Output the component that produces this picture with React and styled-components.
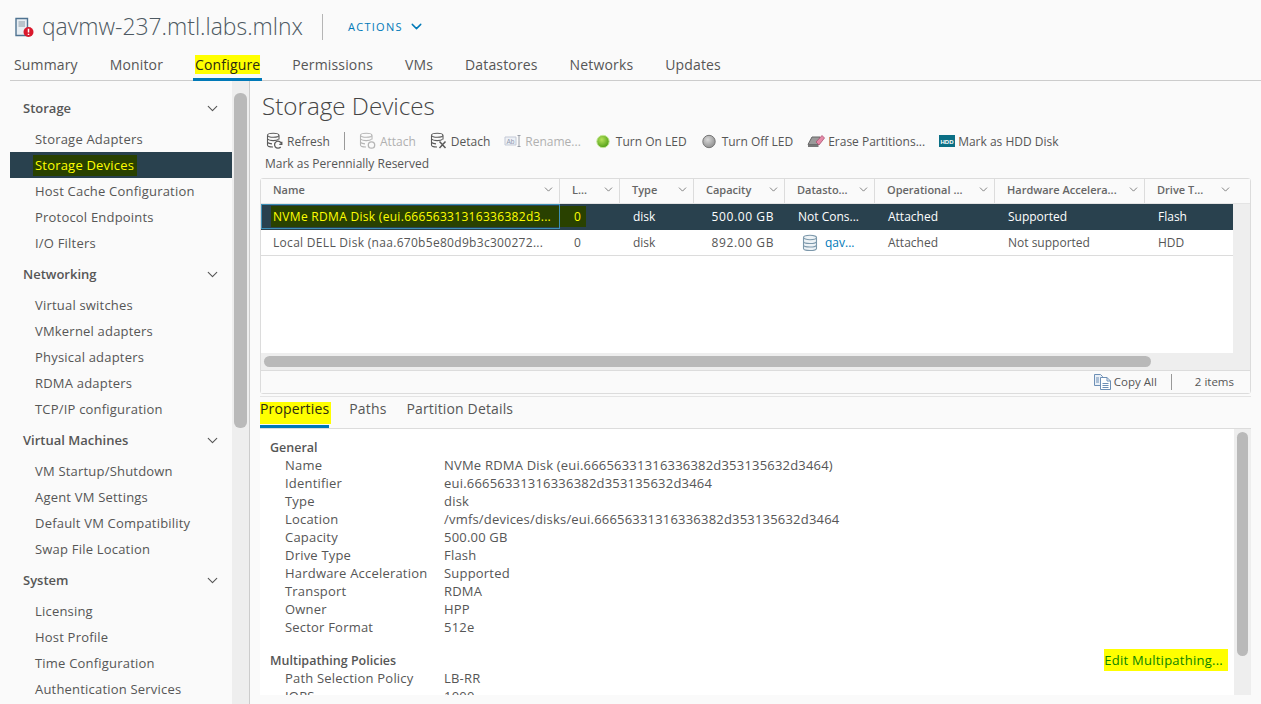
import React from "react";
import styled, { createGlobalStyle } from "styled-components";
import { ChevronDown } from "lucide-react";

const GlobalStyle = createGlobalStyle`
  html, body {
    margin: 0;
    padding: 0;
    background: #fafafa;
    overflow: hidden;
  }
  * {
    box-sizing: border-box;
  }
  body {
    font-family: "Open Sans", "Noto Sans", sans-serif;
    color: #565656;
  }
`;

const tabs = ["Summary", "Monitor", "Configure", "Permissions", "VMs", "Datastores", "Networks", "Updates"];

const sideGroups = [
  { title: "Storage", items: ["Storage Adapters", "Storage Devices", "Host Cache Configuration", "Protocol Endpoints", "I/O Filters"] },
  { title: "Networking", items: ["Virtual switches", "VMkernel adapters", "Physical adapters", "RDMA adapters", "TCP/IP configuration"] },
  { title: "Virtual Machines", items: ["VM Startup/Shutdown", "Agent VM Settings", "Default VM Compatibility", "Swap File Location"] },
  { title: "System", items: ["Licensing", "Host Profile", "Time Configuration", "Authentication Services"] },
];

const columns = ["Name", "L...", "Type", "Capacity", "Datasto...", "Operational ...", "Hardware Accelera...", "Drive T..."];

const general = [
  ["Name", "NVMe RDMA Disk (eui.66656331316336382d353135632d3464)"],
  ["Identifier", "eui.66656331316336382d353135632d3464"],
  ["Type", "disk"],
  ["Location", "/vmfs/devices/disks/eui.66656331316336382d353135632d3464"],
  ["Capacity", "500.00 GB"],
  ["Drive Type", "Flash"],
  ["Hardware Acceleration", "Supported"],
  ["Transport", "RDMA"],
  ["Owner", "HPP"],
  ["Sector Format", "512e"],
];

const HostIcon = () => (
  <svg width="20" height="22" viewBox="0 0 20 22">
    <path d="M1 2.500h11.500v17H1z" fill="#e8eef3" stroke="#4f7391" strokeWidth="1.400" />
    <path d="M3.500 5h6.500v6H3.500z" fill="#b9c3cb" />
    <circle cx="13.500" cy="16" r="5" fill="#d9182c" />
    <path d="M13.500 12.800v3.800M13.500 17.800v1.200" stroke="#fff" strokeWidth="1.500" />
  </svg>
);

const DbIcon = ({ color = "#5a5a5a", badge }) => (
  <svg width="18" height="18" viewBox="0 0 18 18" fill="none" stroke={color} strokeWidth="1.100">
    <path d="M1.500 3.500v9.500c0 1.200 2.400 2 5.500 2M13 3.500v4" />
    <ellipse cx="7.200" cy="3.300" rx="5.700" ry="2" />
    <path d="M1.500 7c1 1.200 3 1.600 5.700 1.600 2.300 0 4.300-.4 5.300-1.300M1.500 10.500c1 .9 2.500 1.300 4.500 1.400" />
    {badge === "refresh" && <path d="M15.500 12a3.500 3.500 0 1 0-.8 3M15.800 9.800V12.300H13.300" strokeWidth="1.300" />}
    {badge === "ring" && <circle cx="12.500" cy="13" r="3.200" strokeWidth="1.300" />}
    {badge === "cross" && <path d="M9.500 9.500l6 6.500M15.500 9.500l-6 6.500" strokeWidth="1.500" />}
  </svg>
);

const RenameIcon = () => (
  <svg width="18" height="16" viewBox="0 0 18 16" fill="none">
    <path d="M1 4h11v8H1z" fill="#eef1f6" stroke="#c3c9d6" />
    <path d="M13.500 2.500h3M13.500 13.500h3M15 2.500v11" stroke="#9a9fa8" />
    <text x="2.500" y="10.500" fontSize="6.500" fontFamily="Liberation Sans" fill="#8d97ad">Ab</text>
  </svg>
);

const LedIcon = ({ on }) => (
  <svg width="16" height="16" viewBox="0 0 16 16">
    <defs>
      <radialGradient id={on ? "ledOn" : "ledOff"} cx="0.4" cy="0.35" r="0.7">
        <stop offset="0" stopColor={on ? "#b5e25a" : "#d8d8d8"} />
        <stop offset="1" stopColor={on ? "#4a9a12" : "#8d8d8d"} />
      </radialGradient>
    </defs>
    <circle cx="8" cy="8.500" r="6.200" fill={`url(#${on ? "ledOn" : "ledOff"})`} stroke={on ? "#c4e89a" : "#777"} strokeWidth="1" />
  </svg>
);

const EraseIcon = () => (
  <svg width="18" height="16" viewBox="0 0 18 16">
    <path d="M1 11.500L5 4h8l-1.500 7.500z" fill="#9a9a9a" stroke="#666" />
    <path d="M1 11.500h10.500v2.500H1z" fill="#777" />
    <path d="M9 9l6-6.500 2.500 2.500-5.500 7z" fill="#e58aa8" stroke="#a94f6f" strokeWidth="0.800" />
  </svg>
);

const HddIcon = () => (
  <svg width="16" height="12" viewBox="0 0 16 12">
    <rect width="16" height="12" fill="#0b6f85" />
    <text x="8" y="8.600" textAnchor="middle" fontSize="6" fontWeight="700" fontFamily="Liberation Sans" fill="#fff">HDD</text>
  </svg>
);

const CopyIcon = () => (
  <svg width="17" height="17" viewBox="0 0 17 17" fill="none" stroke="#6d8fb5" strokeWidth="1">
    <path d="M.5 1.500h6l2 2v9h-8z" fill="#eaf0f7" />
    <path d="M6.500 4.500h6.500l3.500 3.500v8.500h-10z" fill="#fff" />
    <path d="M13 4.500V8h3.500M8.500 10.500h6M8.500 12.500h6M8.500 14.500h6M2 5h3M2 7h3M2 9h3" />
  </svg>
);

const DatastoreIcon = () => (
  <svg width="16" height="18" viewBox="0 0 16 18" fill="#eef3f6" stroke="#7c98ab" strokeWidth="1.100">
    <path d="M1.500 3.500v11c0 1.200 2.900 2 6.500 2s6.500-.8 6.500-2v-11" />
    <ellipse cx="8" cy="3.500" rx="6.500" ry="2.200" />
    <path d="M1.500 7.500c0 1.200 2.900 2 6.500 2s6.500-.8 6.500-2M1.500 11c0 1.200 2.900 2 6.500 2s6.500-.8 6.500-2" fill="none" />
  </svg>
);

const App = () => (
  <Page>
    <GlobalStyle />
    <Header>
      <HostIcon />
      <HostName>qavmw-237.mtl.labs.mlnx</HostName>
      <HeaderDivider />
      <Actions>
        ACTIONS
        <ChevronDown size={17} strokeWidth={2} />
      </Actions>
    </Header>

    <TabBar>
      {tabs.map((tab) => (
        <TopTab key={tab} $active={tab === "Configure"}>
          {tab === "Configure" ? <Marker>{tab}</Marker> : tab}
        </TopTab>
      ))}
    </TabBar>

    <Body>
      <Sidebar>
        <SideNav>
          {sideGroups.map((group) => (
            <SideGroup key={group.title}>
              <SideTitle>
                {group.title}
                <ChevronDown size={17} strokeWidth={1.6} />
              </SideTitle>
              {group.items.map((item) => (
                <SideItem key={item} $active={item === "Storage Devices"}>
                  {item === "Storage Devices" ? <SideMark>{item}</SideMark> : item}
                </SideItem>
              ))}
            </SideGroup>
          ))}
        </SideNav>
        <SideTrack>
          <SideThumb />
        </SideTrack>
      </Sidebar>

      <Main>
        <PageTitle>Storage Devices</PageTitle>
        <Toolbar>
          <ToolButton><DbIcon badge="refresh" />Refresh</ToolButton>
          <ToolDivider />
          <ToolButton $disabled><DbIcon color="#b5b5b5" badge="ring" />Attach</ToolButton>
          <ToolButton><DbIcon badge="cross" />Detach</ToolButton>
          <ToolButton $disabled><RenameIcon />Rename...</ToolButton>
          <ToolButton $led><LedIcon on />Turn On LED</ToolButton>
          <ToolButton $led><LedIcon />Turn Off LED</ToolButton>
          <ToolButton><EraseIcon />Erase Partitions...</ToolButton>
          <ToolButton><HddIcon />Mark as HDD Disk</ToolButton>
        </Toolbar>
        <ToolbarRow>Mark as Perennially Reserved</ToolbarRow>

        <Table>
          <HeadRow>
            {columns.map((col) => (
              <HeadCell key={col}>
                <span>{col}</span>
                <ChevronDown size={13} strokeWidth={1.5} />
              </HeadCell>
            ))}
          </HeadRow>
          <TableBody>
            <Rows>
              <DataRow $selected>
                <NameCell $focused><NameMark>NVMe RDMA Disk (eui.66656331316336382d3...</NameMark></NameCell>
                <ZeroMark>0</ZeroMark>
                <Cell>disk</Cell>
                <Cell $right>500.00 GB</Cell>
                <Cell>Not Cons...</Cell>
                <Cell>Attached</Cell>
                <Cell>Supported</Cell>
                <Cell>Flash</Cell>
              </DataRow>
              <DataRow>
                <NameCell>Local DELL Disk (naa.670b5e80d9b3c300272...</NameCell>
                <Cell>0</Cell>
                <Cell>disk</Cell>
                <Cell $right>892.00 GB</Cell>
                <Cell $icon><DatastoreIcon /><StoreLink>qav...</StoreLink></Cell>
                <Cell>Attached</Cell>
                <Cell>Not supported</Cell>
                <Cell>HDD</Cell>
              </DataRow>
            </Rows>
            <RowsTrack />
          </TableBody>
          <HScrollTrack>
            <HScrollThumb />
          </HScrollTrack>
          <TableFooter>
            <CopyAll><CopyIcon />Copy All</CopyAll>
            <FooterDivider />
            <span>2 items</span>
          </TableFooter>
        </Table>

        <SubTabs>
          <SubTab $active><Marker>Properties</Marker></SubTab>
          <SubTab>Paths</SubTab>
          <SubTab>Partition Details</SubTab>
        </SubTabs>

        <Details>
          <DetailsContent>
            <SectionTitle>General</SectionTitle>
            {general.map(([label, value]) => (
              <DetailRow key={label}>
                <span>{label}</span>
                <span>{value}</span>
              </DetailRow>
            ))}
            <PolicyHead>
              <SectionTitle>Multipathing Policies</SectionTitle>
              <EditLink>Edit Multipathing...</EditLink>
            </PolicyHead>
            <DetailRow><span>Path Selection Policy</span><span>LB-RR</span></DetailRow>
            <DetailRow><span>IOPS</span><span>1000</span></DetailRow>
          </DetailsContent>
          <DetailsTrack>
            <DetailsThumb />
          </DetailsTrack>
        </Details>
      </Main>
    </Body>
  </Page>
);

const Page = styled.div`
  width: 1261px;
  height: 704px;
  overflow: hidden;
  padding-left: 10px;
  background: #fafafa;
`;

const Header = styled.div`
  height: 50px;
  padding: 3px 0 0 5px;
  display: flex;
  align-items: center;
`;

const HostName = styled.div`
  margin-left: 7px;
  font-size: 22.900px;
  font-weight: 300;
  color: #4d5962;
`;

const HeaderDivider = styled.div`
  width: 1px;
  height: 26px;
  margin: 0 25px 0 19px;
  background: #b5b5b5;
`;

const Actions = styled.div`
  display: flex;
  align-items: center;
  gap: 5px;
  font-size: 11px;
  letter-spacing: 1.300px;
  color: #0079b8;
`;

const TabBar = styled.div`
  height: 31px;
  display: flex;
  gap: 32px;
  padding-left: 4px;
  border-bottom: 1px solid #ccc;
`;

const TopTab = styled.div`
  height: 31px;
  font-size: 14px;
  letter-spacing: 0.15px;
  line-height: 30px;
  color: #565656;
  ${(p) => p.$active && "margin: 0 -2px; padding: 0 2px; border-bottom: 3px solid #0079b8;"}
`;

const Marker = styled.span`
  display: inline-block;
  height: 19px;
  line-height: 19px;
  margin-top: 5px;
  vertical-align: top;
  background: #ffff00;
  color: #2c2c10;
`;

const Body = styled.div`
  display: flex;
  height: 623px;
`;

const Sidebar = styled.div`
  width: 240px;
  flex: none;
  display: flex;
  border-right: 1px solid #ccc;
`;

const SideNav = styled.div`
  width: 222px;
  padding-top: 14px;
  overflow: hidden;
`;

const SideGroup = styled.div`
  margin-bottom: 5px;
`;

const SideTitle = styled.div`
  height: 26px;
  padding: 0 11px 0 13px;
  display: flex;
  align-items: center;
  justify-content: space-between;
  font-size: 13px;
  font-weight: 600;
  color: #565656;
  margin-bottom: 5px;
`;

const SideItem = styled.div`
  height: 26px;
  line-height: 26px;
  padding-left: 25px;
  font-size: 13px;
  letter-spacing: 0.2px;
  color: #565656;
  background: ${(p) => (p.$active ? "#29414e" : "transparent")};
`;

const SideMark = styled.span`
  display: inline-block;
  height: 21px;
  line-height: 21px;
  margin-left: -2px;
  padding: 0 3px 0 2px;
  background: #294100;
  color: #ffff00;
`;

const SideTrack = styled.div`
  width: 17px;
  background: #eeeeee;
  padding: 12px 2px 0;
`;

const SideThumb = styled.div`
  height: 335px;
  border-radius: 6px;
  background: #b9b9b9;
`;

const Main = styled.div`
  flex: 1;
  min-width: 0;
  padding-left: 10px;
  width: 1011px;
`;

const PageTitle = styled.div`
  height: 49px;
  padding: 10px 0 0 2px;
  font-size: 24.200px;
  font-weight: 300;
  line-height: 30px;
  color: #454545;
`;

const Toolbar = styled.div`
  height: 22px;
  display: flex;
  align-items: center;
  gap: 14px;
  padding-left: 6px;
`;

const ToolButton = styled.div`
  display: flex;
  align-items: center;
  gap: ${(p) => (p.$led ? "5px" : "3px")};
  font-size: 12px;
  white-space: nowrap;
  color: ${(p) => (p.$disabled ? "#b0b0b0" : "#565656")};
`;

const ToolDivider = styled.div`
  width: 1px;
  height: 18px;
  background: #999;
`;

const ToolbarRow = styled.div`
  height: 26px;
  padding-left: 5px;
  font-size: 12px;
  line-height: 24px;
`;

const Table = styled.div`
  width: 991px;
  height: 216px;
  background: #fff;
  border: 1px solid #dcdcdc;
  border-radius: 3px;
  display: flex;
  flex-direction: column;
`;

const HeadRow = styled.div`
  height: 25px;
  flex: none;
  display: grid;
  grid-template-columns: 299px 60px 74px 91px 90px 120px 150px 1fr;
  background: #fafafa;
  border-bottom: 1px solid #e4e4e4;
`;

const HeadCell = styled.div`
  display: flex;
  align-items: center;
  justify-content: space-between;
  padding: 0 4px 3px 12px;
  font-size: 11px;
  font-weight: 600;
  color: #666;
  white-space: nowrap;
  border-right: 1px solid #dcdcdc;
  &:last-child {
    border-right: none;
    padding-right: 18px;
  }
`;

const TableBody = styled.div`
  flex: none;
  height: 149px;
  display: flex;
`;

const Rows = styled.div`
  width: 972px;
`;

const RowsTrack = styled.div`
  flex: 1;
  background: #eeeeee;
`;

const DataRow = styled.div`
  height: 26px;
  display: grid;
  grid-template-columns: 299px 60px 74px 91px 90px 120px 150px 1fr;
  align-items: center;
  font-size: 12px;
  background: ${(p) => (p.$selected ? "#29414e" : "#fff")};
  color: ${(p) => (p.$selected ? "#fff" : "#565656")};
  border-bottom: ${(p) => (p.$selected ? "1px solid #29414e" : "1px solid #dcdcdc")};
  & > :nth-child(2) {
    padding-left: 14px;
  }
`;

const Cell = styled.div`
  display: flex;
  align-items: center;
  gap: 7px;
  padding: ${(p) => (p.$right ? "0 11px 0 0" : p.$icon ? "0 0 0 17px" : "0 0 0 13px")};
  justify-content: ${(p) => (p.$right ? "flex-end" : "flex-start")};
  letter-spacing: ${(p) => (p.$right ? "0.6px" : "0")};
  white-space: nowrap;
`;

const NameCell = styled.div`
  height: 100%;
  display: flex;
  align-items: center;
  padding-left: ${(p) => (p.$focused ? "10px" : "12px")};
  letter-spacing: 0.3px;
  white-space: nowrap;
  overflow: hidden;
  outline: ${(p) => (p.$focused ? "1px solid #3c8fb5" : "none")};
  outline-offset: -1px;
`;

const NameMark = styled.div`
  flex: 1;
  height: 21px;
  line-height: 21px;
  padding-left: 2px;
  background: #294100;
  color: #ffff00;
`;

const ZeroMark = styled.div`
  width: 26px;
  height: 21px;
  line-height: 21px;
  background: #294100;
  color: #ffff00;
`;

const StoreLink = styled.span`
  color: #0079b8;
`;

const HScrollTrack = styled.div`
  flex: none;
  height: 17px;
  padding: 3px;
  background: #eeeeee;
`;

const HScrollThumb = styled.div`
  width: 887px;
  height: 11px;
  border-radius: 6px;
  background: #b9b9b9;
`;

const TableFooter = styled.div`
  flex: 1;
  display: flex;
  align-items: center;
  justify-content: flex-end;
  padding: 0 16px 1px 0;
  font-size: 11.500px;
  background: #fafafa;
  border-top: 1px solid #dcdcdc;
`;

const CopyAll = styled.div`
  display: flex;
  align-items: center;
  gap: 3px;
`;

const FooterDivider = styled.div`
  width: 1px;
  height: 16px;
  margin: 0 23px 0 14px;
  background: #999;
`;

const SubTabs = styled.div`
  width: 991px;
  height: 33px;
  margin-top: 2px;
  display: flex;
  gap: 20px;
  border-top: 1px solid #e4e4e4;
  border-bottom: 1px solid #dcdcdc;
`;

const SubTab = styled.div`
  height: 31px;
  padding-top: 1px;
  font-size: 14px;
  letter-spacing: 0.15px;
  line-height: 22px;
  color: #565656;
  border-bottom: ${(p) => (p.$active ? "3px solid #0079b8" : "none")};
  ${Marker} {
    height: 22px;
    margin-top: 4px;
    line-height: 14px;
    padding-right: 2px;
    margin-right: -2px;
  }
`;

const Details = styled.div`
  width: 991px;
  height: 266px;
  display: flex;
  background: #fff;
`;

const DetailsContent = styled.div`
  flex: 1;
  min-width: 0;
  padding: 9px 0 0 10px;
  overflow: hidden;
`;

const SectionTitle = styled.div`
  height: 18px;
  line-height: 20px;
  font-size: 12.500px;
  font-weight: 600;
  color: #565656;
`;

const DetailRow = styled.div`
  height: 18px;
  display: grid;
  grid-template-columns: 159px 1fr;
  padding-left: 15px;
  font-size: 13px;
  letter-spacing: 0.2px;
  line-height: 18px;
  color: #565656;
`;

const PolicyHead = styled.div`
  margin-top: 15px;
  display: flex;
  justify-content: space-between;
  padding-right: 6px;
`;

const EditLink = styled.div`
  height: 22px;
  margin: -2px 0;
  padding: 2px 5px 2px 0;
  line-height: 18px;
  font-size: 13px;
  letter-spacing: 0.25px;
  background: #ffff00;
  color: #0a8400;
`;

const DetailsTrack = styled.div`
  width: 17px;
  flex: none;
  background: #eeeeee;
  padding: 3px 3px 0;
`;

const DetailsThumb = styled.div`
  height: 224px;
  border-radius: 6px;
  background: #b9b9b9;
`;

export default App;
